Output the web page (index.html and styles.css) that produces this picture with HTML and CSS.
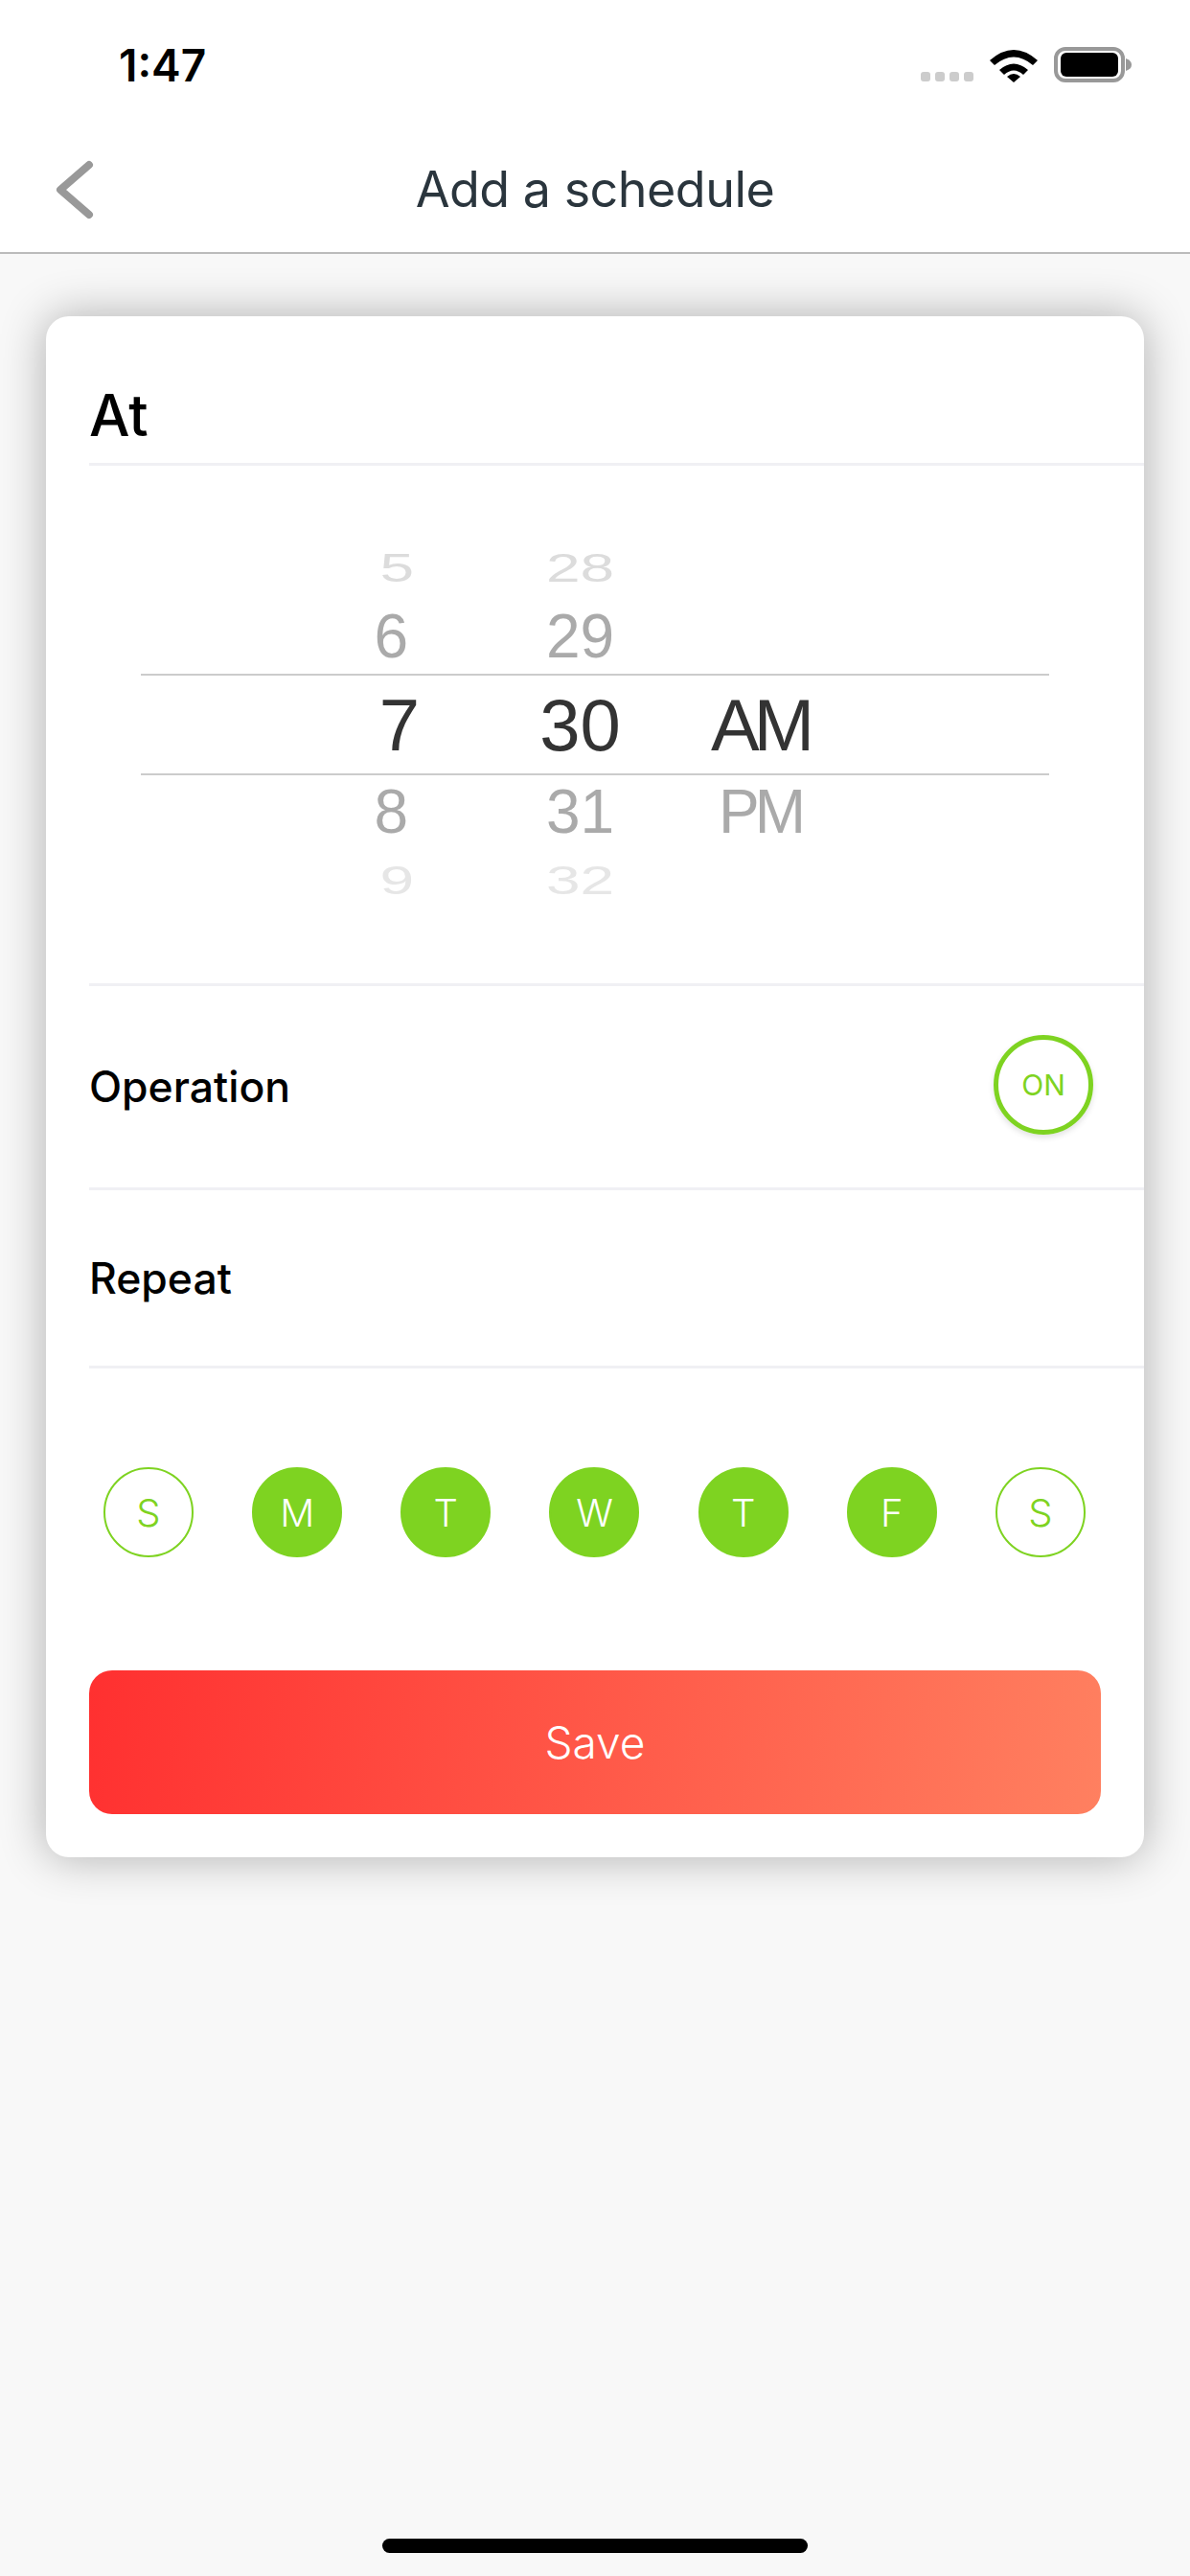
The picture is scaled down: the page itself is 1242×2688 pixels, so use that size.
FILE: index.html
```html
<!DOCTYPE html>
<html lang="en">
<head>
    <meta charset="UTF-8">
    <meta name="viewport" content="width=device-width, initial-scale=1.0">
    <title>Add a schedule</title>
    <link rel="stylesheet" href="styles.css">
</head>
<body>
    <header class="top">
        <div class="status-bar">
            <span class="time">1:47</span>
            <div class="status-icons">
                <div class="signal"><span></span><span></span><span></span><span></span></div>
                <svg class="wifi" width="50" height="35" viewBox="0 0 50 35">
                    <path d="M0 12Q25-10 50 12L45 17Q25 0 5 17Z"/>
                    <path d="M10 22Q25 9 40 22L35 27Q25 18 15 27Z"/>
                    <path d="M18 29Q25 23 32 29L25 35Z"/>
                </svg>
                <svg class="battery" width="81" height="37" viewBox="0 0 81 37">
                    <rect x="2" y="2" width="70" height="33" rx="10" fill="none" stroke="#999" stroke-width="4"/>
                    <rect x="7" y="6" width="60" height="25" rx="6"/>
                    <path d="M75 12Q81 14 81 18.500Q81 23 75 25Z" fill="#999"/>
                </svg>
            </div>
        </div>
        <nav class="nav-bar">
            <svg class="back" width="40" height="62" viewBox="0 0 40 62">
                <path d="M35 5L5 31L35 57" fill="none" stroke="#999" stroke-width="8" stroke-linecap="round" stroke-linejoin="round"/>
            </svg>
            <h1 class="nav-title">Add a schedule</h1>
        </nav>
    </header>

    <main class="card">
        <div class="section section-at">
            <h2 class="at-label">At</h2>
        </div>

        <!-- time wheel -->
        <div class="section picker">
            <div class="wheel-row far far-top"><span class="hour">5</span><span class="minute">28</span><span></span></div>
            <div class="wheel-row near"><span class="hour">6</span><span class="minute">29</span><span></span></div>
            <div class="wheel-row selected"><span class="hour">7</span><span class="minute">30</span><span class="ampm">AM</span></div>
            <div class="wheel-row near near-bottom"><span class="hour">8</span><span class="minute">31</span><span class="ampm">PM</span></div>
            <div class="wheel-row far far-bottom"><span class="hour">9</span><span class="minute">32</span><span></span></div>
        </div>

        <div class="section section-operation">
            <span class="row-label">Operation</span>
            <div class="toggle">ON</div>
        </div>

        <div class="section section-repeat">
            <span class="row-label">Repeat</span>
        </div>

        <div class="days">
            <div class="day">S</div>
            <div class="day active">M</div>
            <div class="day active">T</div>
            <div class="day active">W</div>
            <div class="day active">T</div>
            <div class="day active">F</div>
            <div class="day">S</div>
        </div>

        <button class="save-btn">Save</button>
    </main>

    <div class="home-indicator"></div>
</body>
</html>
```

FILE: styles.css
```css
* {
    box-sizing: border-box;
}
body {
    font-family: Inter, "Noto Sans", sans-serif;
    background-color: #f8f8f8;
    margin: 0;
    min-height: 2688px;
    display: flex;
    flex-direction: column;
}
.top {
    background-color: #fff;
    border-bottom: 2px solid #bbb;
    height: 265px;
}
.status-bar {
    height: 132px;
    padding: 49px 61px 0 124px;
    display: flex;
    justify-content: space-between;
    align-items: flex-start;
}
.time {
    font-size: 46px;
    font-weight: 600;
    line-height: 38px;
    color: #000;
}
.status-icons {
    display: flex;
    align-items: flex-end;
    gap: 17px;
}
.signal {
    display: flex;
    gap: 5px;
    padding-bottom: 1px;
}
.signal span {
    width: 10px;
    height: 10px;
    border-radius: 3px;
    background-color: #ccc;
}
.nav-bar {
    height: 131px;
    padding: 0 58px;
    display: grid;
    grid-template-columns: 1fr auto 1fr;
    align-items: center;
}
.nav-title {
    margin: 0;
    font-size: 52px;
    font-weight: 400;
    letter-spacing: -0.5px;
    color: #2a353d;
}
.card {
    width: 1146px;
    margin: 65px 0 0 48px;
    padding-left: 45px;
    background-color: #fff;
    border-radius: 24px;
    box-shadow: 0 0 48px rgba(0, 0, 0, 0.3);
    height: 1608px;
}
.section {
    border-bottom: 3px solid #f0f0f4;
}
.section-at {
    height: 156px;
    padding-top: 68px;
}
.at-label {
    margin: 0;
    font-size: 60px;
    font-weight: 500;
    line-height: 70px;
    color: #000;
}
.picker {
    height: 543px;
    padding: 69px 0 0 54px;
    font-family: "Liberation Sans", Arial, sans-serif;
}
.wheel-row {
    width: 948px;
    display: grid;
    grid-template-columns: 171px 190px 190px 190px;
    align-items: center;
    text-align: center;
}
.wheel-row span:first-child {
    grid-column: 2;
}
.hour {
    text-align: right;
}
.minute {
    padding-left: 5px;
}
.far {
    height: 64px;
    font-size: 64px;
}
.far span {
    transform: scaleY(0.66);
}
.far .hour {
    padding-right: 76px;
}
.far-top {
    margin-bottom: 6px;
    color: #dcdcdc;
}
.far-bottom {
    margin-top: -4px;
    color: #e6e6e6;
}
.near {
    height: 78px;
    font-size: 64px;
    color: #aaa;
}
.near-bottom {
    height: 76px;
}
.near .hour {
    padding-right: 82px;
}
.selected {
    height: 106px;
    font-size: 76px;
    color: #333;
    border-top: 2px solid #ccc;
    border-bottom: 2px solid #ccc;
}
.selected .hour {
    padding-right: 70px;
}
.ampm {
    letter-spacing: -6px;
}
.near .ampm {
    letter-spacing: -5px;
}
.section-operation {
    height: 213px;
    padding-right: 53px;
    display: flex;
    justify-content: space-between;
    align-items: center;
}
.section-repeat {
    height: 186px;
    display: flex;
    align-items: center;
}
.row-label {
    font-size: 44.5px;
    font-weight: 500;
    color: #000;
}
.toggle {
    width: 104px;
    height: 104px;
    border: 5px solid #7ed321;
    border-radius: 50%;
    display: flex;
    justify-content: center;
    align-items: center;
    font-size: 30px;
    color: #7ed321;
    box-shadow: 0 3px 6px rgba(0, 0, 0, 0.12);
    margin-bottom: 5px;
}
.days {
    width: 1025px;
    margin: 103px 0 118px 15px;
    display: flex;
    justify-content: space-between;
}
.day {
    width: 94px;
    height: 94px;
    border: 2px solid #7ed321;
    border-radius: 50%;
    display: flex;
    justify-content: center;
    align-items: center;
    font-size: 40px;
    font-weight: 300;
    color: #7ed321;
}
.day.active {
    background-color: #7ed321;
    color: #fff;
}
.save-btn {
    display: block;
    width: 1056px;
    height: 150px;
    border: 0;
    border-radius: 24px;
    background: linear-gradient(100deg, #ff3030 0%, #ff8060 100%);
    color: #fff;
    font-family: inherit;
    font-size: 46px;
    font-weight: 300;
}
.home-indicator {
    width: 444px;
    height: 15px;
    margin: auto auto 24px;
    border-radius: 8px;
    background-color: #000;
}
```
